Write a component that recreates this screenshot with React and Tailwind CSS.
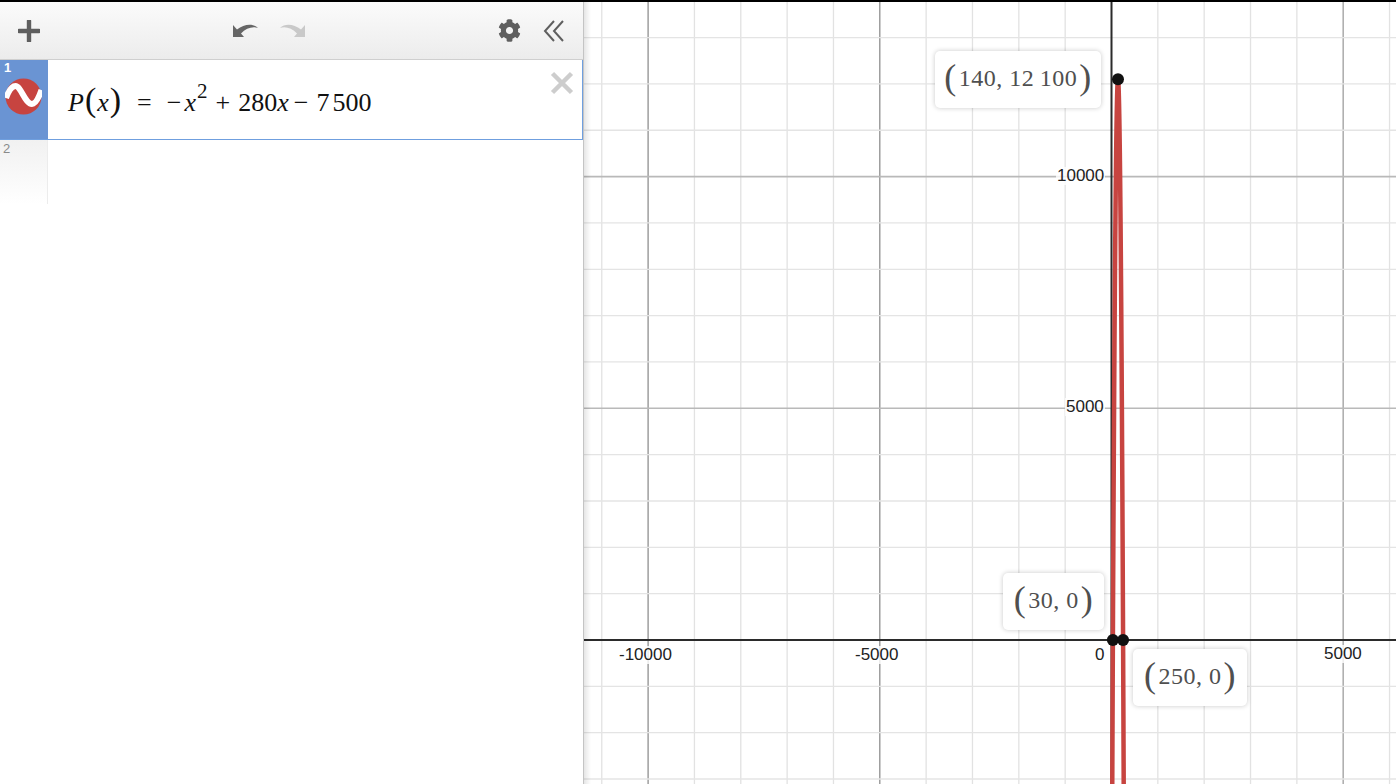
import React from 'react';
import { FaCog } from 'react-icons/fa';

const ORIGIN_X = 527.5; // graph origin, relative to the graph pane
const ORIGIN_Y = 638;
const STEP = 46.34;
const SCALE = STEP / 1000;
const PANE_W = 813;
const PANE_H = 782;

function range(from, to) {
  const out = [];
  for (let i = from; i <= to; i++) out.push(i);
  return out;
}

const curve = range(0, 120)
  .map((i) => {
    const x = 14 + (i / 120) * 252;
    const y = -x * x + 280 * x - 7500;
    return `${(ORIGIN_X + x * SCALE).toFixed(2)},${(ORIGIN_Y - y * SCALE).toFixed(2)}`;
  })
  .join(' ');

function Grid() {
  return (
    <svg className="absolute inset-0" width={PANE_W} height={PANE_H}>
      {range(-12, 7).map((k) => {
        const x = ORIGIN_X + k * STEP;
        const major = k % 5 === 0;
        if (k === 0) return null;
        return (
          <line key={k} x1={x} x2={x} y1={0} y2={PANE_H}
            stroke={major ? (k < 0 ? '#8f8f8f' : '#b0b0b0') : '#e2e2e2'}
            strokeWidth={major && k > 0 ? 1.6 : 1.3} />
        );
      })}
      {range(-3, 14).map((k) => {
        const y = ORIGIN_Y - k * STEP;
        const major = k % 5 === 0;
        if (k === 0) return null;
        return (
          <line key={k} x1={0} x2={PANE_W} y1={y} y2={y}
            stroke={major ? '#b9b9b9' : '#e4e4e4'}
            strokeWidth={major ? 1.6 : 1.3} />
        );
      })}
      <line x1={ORIGIN_X} x2={ORIGIN_X} y1={0} y2={PANE_H} stroke="#2b2b2b" strokeWidth={2} />
      <line x1={0} x2={PANE_W} y1={ORIGIN_Y} y2={ORIGIN_Y} stroke="#2b2b2b" strokeWidth={2} />
      <polyline points={curve} fill="none" stroke="#c74440" strokeWidth={4.5} />
      <circle cx={ORIGIN_X + 30 * SCALE} cy={ORIGIN_Y} r={6} fill="#111" />
      <circle cx={ORIGIN_X + 250 * SCALE} cy={ORIGIN_Y} r={6} fill="#111" />
      <circle cx={ORIGIN_X + 140 * SCALE} cy={ORIGIN_Y - 12100 * SCALE} r={6} fill="#111" />
    </svg>
  );
}

function AxisLabel({ className, children }) {
  return (
    <div className={`absolute bg-white/80 px-px text-[17px] leading-[18px] text-[#222] ${className}`}>
      {children}
    </div>
  );
}

function PointLabel({ className, children }) {
  return (
    <div className={`absolute flex h-[57px] items-center justify-center rounded-[5px] bg-white pb-[3px] text-[24px] tracking-[0.5px] text-[#4f4f4f] shadow-[0_0_5px_rgba(0,0,0,0.22)] font-['Liberation_Serif',serif] ${className}`}>
      <span className="mb-[3px] text-[36px] font-light leading-none">(</span>
      <span className="px-[2px]">{children}</span>
      <span className="mb-[3px] text-[36px] font-light leading-none">)</span>
    </div>
  );
}

function Toolbar() {
  return (
    <div className="flex h-[58px] items-center bg-gradient-to-b from-[#fbfbfb] to-[#ececec] border-b border-[#cfcfcf] pl-[18px] pr-[18px]">
      <svg width="22" height="22" viewBox="0 0 22 22">
        <path d="M11 1 V21 M1 11 H21" stroke="#5f5f5f" strokeWidth="4.4" strokeLinecap="round" />
      </svg>
      <div className="ml-[192px] flex items-center gap-[18px]">
        <svg width="28" height="16" viewBox="0 0 28 16">
          <path d="M1 2 V14 H12 L9 10.5 C14 5 21 3 26 5 C21 0 12 1 5 6.5 Z" fill="#666" />
        </svg>
        <svg width="28" height="16" viewBox="0 0 28 16">
          <path d="M27 2 V14 H16 L19 10.5 C14 5 7 3 2 5 C7 0 16 1 23 6.5 Z" fill="#c9c9c9" />
        </svg>
      </div>
      <FaCog className="ml-auto text-[#5f5f5f]" size={23} />
      <svg className="ml-[22px]" width="22" height="24" viewBox="0 0 22 24">
        <path d="M11 2 L2 12 L11 22 M20 2 L11 12 L20 22" fill="none" stroke="#5f5f5f" strokeWidth="2" />
      </svg>
    </div>
  );
}

function WaveIcon() {
  return (
    <svg width="37" height="37" viewBox="0 0 37 37">
      <circle cx="18.5" cy="18.5" r="18" fill="#c74440" />
      <path d="M1 20 C4 12 7 8 10.5 8 C16 8 20 26 27 26 C31 26 34 19 36.5 12" fill="none" stroke="#fff" strokeWidth="6" />
    </svg>
  );
}

function Formula() {
  return (
    <div className="ml-[20px] flex items-baseline text-[26px] leading-none text-[#111] font-['Liberation_Serif',serif]">
      <i>P</i>
      <span className="ml-[1px] text-[34px] font-light leading-none">(</span>
      <i className="mx-[1px]">x</i>
      <span className="text-[34px] font-light leading-none">)</span>
      <span className="ml-[16px] mr-[15px]">=</span>
      <span className="mr-[3px]">−</span>
      <i>x</i>
      <sup className="relative top-[-13px] ml-[1px] align-baseline text-[21px] leading-none">2</sup>
      <span className="mx-[8px]">+</span>
      <span>280</span>
      <i>x</i>
      <span className="ml-[5px] mr-[8px]">−</span>
      <span>7</span>
      <span className="ml-[3px]">500</span>
    </div>
  );
}

function ExpressionList() {
  return (
    <div className="flex-1 bg-white">
      <div className="relative flex h-[80px] items-center border-b border-r border-[#6f9fdf] font-['Liberation_Sans',sans-serif]">
        <div className="relative flex h-full w-[48px] shrink-0 items-center justify-center bg-[#6a94d3] pb-[7px] pr-[2px] pt-[1px]">
          <span className="absolute left-[4px] top-[1px] text-[13px] font-bold leading-[14px] text-white">1</span>
          <WaveIcon />
        </div>
        <Formula />
        <svg className="absolute right-[8px] top-[11px]" width="24" height="24" viewBox="0 0 24 24">
          <path d="M2.5 2.5 L21.5 21.5 M21.5 2.5 L2.5 21.5" stroke="#cdcdcd" strokeWidth="4.5" />
        </svg>
      </div>
      <div className="h-[64px] w-[48px] border-r border-[#ececec] bg-gradient-to-b from-[#f1f1f1] to-white pl-[3px] pt-[2px] text-[13px] leading-[14px] text-[#8a8a8a] font-['Liberation_Sans',sans-serif]">
        2
      </div>
    </div>
  );
}

export default function App() {
  return (
    <div className="flex h-[784px] w-[1396px] overflow-hidden border-t-2 border-black bg-white">
      <div className="flex w-[583px] shrink-0 flex-col">
        <Toolbar />
        <ExpressionList />
      </div>
      <div className="relative flex-1 overflow-hidden border-l border-[#c4c4c4] font-['Liberation_Sans',sans-serif]">
        <Grid />
        <div className="absolute inset-y-0 left-0 w-[7px] bg-gradient-to-r from-black/10 to-transparent" />
        <AxisLabel className="left-[34px] top-[644px]">-10000</AxisLabel>
        <AxisLabel className="left-[270px] top-[644px]">-5000</AxisLabel>
        <AxisLabel className="left-[510px] top-[644px]">0</AxisLabel>
        <AxisLabel className="left-[739px] top-[643px]">5000</AxisLabel>
        <AxisLabel className="left-[472px] top-[165px]">10000</AxisLabel>
        <AxisLabel className="left-[481px] top-[396px]">5000</AxisLabel>
        <PointLabel className="left-[351px] top-[49px] w-[166px]">{'140, 12\u2009100'}</PointLabel>
        <PointLabel className="left-[419px] top-[571px] w-[101px]">30, 0</PointLabel>
        <PointLabel className="left-[549px] top-[647px] w-[114px]">250, 0</PointLabel>
      </div>
    </div>
  );
}
